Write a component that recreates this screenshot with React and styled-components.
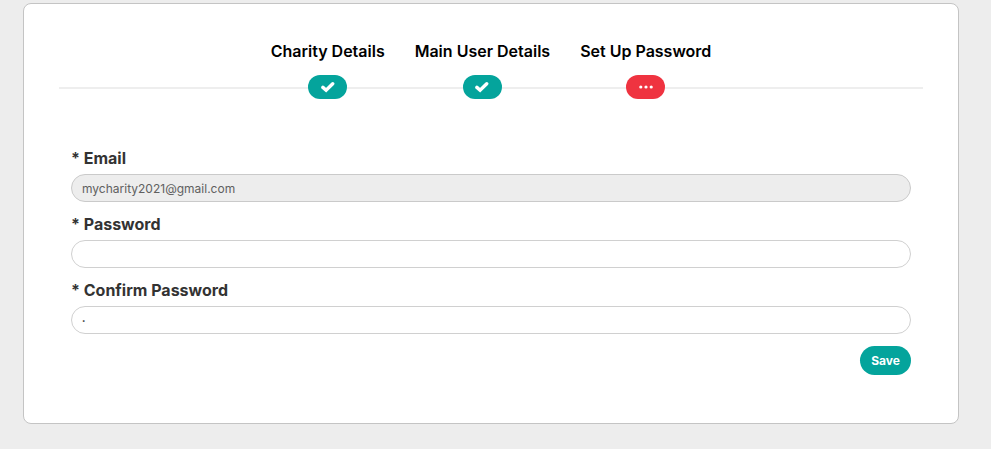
import { useState } from 'react';
import styled, { createGlobalStyle } from 'styled-components';

const STEPS = [
  { title: 'Charity Details', done: true },
  { title: 'Main User Details', done: true },
  { title: 'Set Up Password', done: false },
];

const CheckIcon = () => (
  <svg width='14' height='12' viewBox='0 0 14 12' aria-hidden='true'>
    <path d='M1.9 6.4 5.1 9.2 11.7 2.8' fill='none' stroke='#fff' strokeWidth='3.4' strokeLinecap='round' />
  </svg>
);

const DotsIcon = () => (
  <svg width='16' height='4' viewBox='0 0 16 4' fill='#fff' aria-hidden='true'>
    <circle cx='2.8' cy='2' r='1.6' />
    <circle cx='8' cy='2' r='1.6' />
    <circle cx='13.2' cy='2' r='1.6' />
  </svg>
);

const Stepper = () => (
  <StyledSteps>
    {STEPS.map(({ title, done }) => (
      <StyledStep key={title} aria-current={done ? undefined : 'step'}>
        {title}
        <StyledMarker $done={done}>{done ? <CheckIcon /> : <DotsIcon />}</StyledMarker>
      </StyledStep>
    ))}
  </StyledSteps>
);

export default function App() {
  const [password, setPassword] = useState('');
  const [confirm, setConfirm] = useState('a');

  return (
    <>
      <GlobalStyle />
      <StyledCard>
        <Stepper />
        <StyledForm onSubmit={(e) => e.preventDefault()}>
          <StyledField>
            <StyledLabel htmlFor='email'>* Email</StyledLabel>
            <StyledInput id='email' type='email' value='mycharity2021@gmail.com' disabled />
          </StyledField>
          <StyledField>
            <StyledLabel htmlFor='password'>* Password</StyledLabel>
            <StyledInput
              id='password'
              type='password'
              value={password}
              onChange={(e) => setPassword(e.target.value)}
            />
          </StyledField>
          <StyledField>
            <StyledLabel htmlFor='confirm'>* Confirm Password</StyledLabel>
            <StyledInput
              id='confirm'
              type='password'
              value={confirm}
              onChange={(e) => setConfirm(e.target.value)}
            />
          </StyledField>
          <StyledSaveBtn type='submit'>Save</StyledSaveBtn>
        </StyledForm>
      </StyledCard>
    </>
  );
}

const GlobalStyle = createGlobalStyle`
  * {
    box-sizing: border-box;
  }
  body {
    margin: 0;
    background-color: #ededed;
    font-family: Inter, 'Liberation Sans', sans-serif;
  }
`;

const StyledCard = styled.main`
  margin: 3px 32px 24px 23px;
  padding: 37px 35px 48px;
  background-color: #fff;
  border: 1px solid #c4c4c4;
  border-radius: 8px;
`;

const StyledSteps = styled.ol`
  display: flex;
  justify-content: center;
  gap: 30px;
  margin: 0;
  padding: 0;
  list-style: none;
  background: linear-gradient(#eee, #eee) no-repeat 0 calc(100% - 10px) / 100% 2px;
`;

const StyledStep = styled.li`
  display: flex;
  flex-direction: column;
  align-items: center;
  gap: 14px;
  color: #000;
  font-size: 16px;
  font-weight: 600;
  line-height: 20px;
`;

const StyledMarker = styled.span`
  display: flex;
  align-items: center;
  justify-content: center;
  width: 39px;
  height: 24px;
  border-radius: 12px;
  background-color: ${({ $done }) => ($done ? '#04a49c' : '#ef3340')};
`;

const StyledForm = styled.form`
  display: flex;
  flex-direction: column;
  gap: 12px;
  padding: 49px 12px 0;
`;

const StyledField = styled.div`
  display: flex;
  flex-direction: column;
  gap: 6px;
`;

const StyledLabel = styled.label`
  color: #333;
  font-size: 16px;
  font-weight: 700;
  line-height: 20px;
`;

const StyledInput = styled.input`
  width: 100%;
  height: 28px;
  padding: 0 10px;
  border: 1px solid #d0d0d0;
  border-radius: 14px;
  background-color: #fff;
  color: #333;
  font-family: inherit;
  font-size: 12px;

  &[type='password'] {
    font-size: 6px;
  }

  &:disabled {
    background-color: #ededed;
    border-color: #cacaca;
    color: #606060;
  }
`;

const StyledSaveBtn = styled.button`
  align-self: flex-end;
  height: 29px;
  padding: 0 11px;
  border: none;
  border-radius: 15px;
  background-color: #04a49c;
  color: #fff;
  font-family: inherit;
  font-size: 12px;
  font-weight: 700;
  cursor: pointer;
`;
